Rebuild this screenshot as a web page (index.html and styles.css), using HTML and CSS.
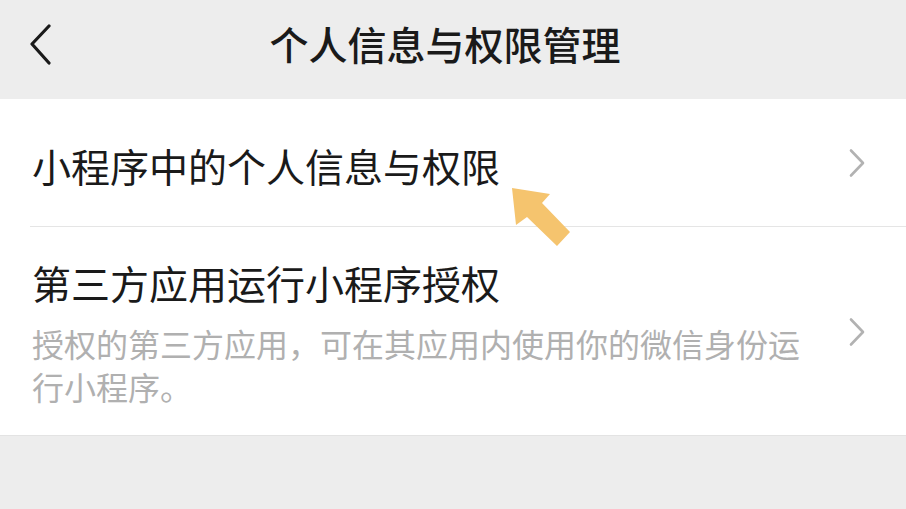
FILE: index.html
```html
<!DOCTYPE html>
<html lang="zh-CN">
<head>
<meta charset="utf-8">
<title>个人信息与权限管理</title>
<link rel="stylesheet" href="styles.css">
</head>
<body>
<div class="page">
  <header class="nav">
    <span class="nav-back" aria-label="返回">
      <svg width="24" height="42" viewBox="0 0 24 42"><polyline points="20,3 3,21 20,40" fill="none" stroke="#1a1a1a" stroke-width="3.2" stroke-linecap="round" stroke-linejoin="round"/></svg>
    </span>
    <h1 class="nav-title">个人信息与权限管理</h1>
  </header>

  <section class="list">
    <div class="cell cell-single">
      <div class="cell-body">
        <div class="cell-title">小程序中的个人信息与权限</div>
      </div>
      <svg class="cell-arrow" width="18" height="30" viewBox="0 0 18 30"><polyline points="3,2.5 15,15 3,27.5" fill="none" stroke="#b2b2b2" stroke-width="2.6" stroke-linecap="round" stroke-linejoin="round"/></svg>
    </div>
    <div class="cell cell-double">
      <div class="cell-body">
        <div class="cell-title">第三方应用运行小程序授权</div>
        <div class="cell-desc">授权的第三方应用，可在其应用内使用你的微信身份运行小程序。</div>
      </div>
      <svg class="cell-arrow" width="18" height="30" viewBox="0 0 18 30"><polyline points="3,2.5 15,15 3,27.5" fill="none" stroke="#b2b2b2" stroke-width="2.6" stroke-linecap="round" stroke-linejoin="round"/></svg>
    </div>

    <svg class="pointer" width="70" height="70" viewBox="0 0 70 70">
      <polygon points="2,3 40,9 32,18 60,47 47,61 17,32 6,40" fill="#f5c46e"/>
    </svg>
  </section>
</div>
</body>
</html>
```

FILE: styles.css
```css
* {
  box-sizing: border-box;
}

html, body {
  margin: 0;
  padding: 0;
}

body {
  width: 906px;
  height: 509px;
  overflow: hidden;
  background: #ededed;
  font-family: "Noto Sans CJK SC", "Noto Sans", sans-serif;
  color: #1a1a1a;
}

.page {
  display: flex;
  flex-direction: column;
}

/* top navigation bar */
.nav {
  height: 99px;
  display: flex;
  align-items: center;
  position: relative;
  background: #ededed;
}

.nav-back {
  position: absolute;
  left: 29px;
  top: 23px;
  display: flex;
}

.nav-title {
  flex: 1;
  margin: 0;
  padding-right: 16px;
  padding-bottom: 14px;
  text-align: center;
  font-size: 39px;
  font-weight: 500;
  line-height: 50px;
  color: #1a1a1a;
}

/* settings list */
.list {
  position: relative;
  background: #fff;
  border-bottom: 1px solid #e3e3e3;
}

.cell {
  display: flex;
  align-items: center;
  padding-left: 32px;
  padding-right: 40px;
  position: relative;
}

.cell + .cell::before {
  content: "";
  position: absolute;
  left: 30px;
  right: 0;
  top: 0;
  height: 1px;
  background: #e5e5e5;
}

.cell-single {
  height: 127px;
  padding-top: 5px;
}

.cell-double {
  height: 209px;
  padding-top: 2px;
}

.cell-body {
  flex: 1;
  display: flex;
  flex-direction: column;
}

.cell-title {
  font-size: 39px;
  line-height: 52px;
  color: #1a1a1a;
}

.cell-double .cell-title {
  margin-bottom: 14px;
}

.cell-desc {
  width: 780px;
  font-size: 32px;
  line-height: 43px;
  color: #b0b0b0;
}

.cell-single .cell-arrow {
  margin-top: -5px;
}

.cell-arrow {
  flex: none;
  margin-left: 18px;
}

/* highlight arrow laid over the first row */
.pointer {
  position: absolute;
  left: 510px;
  top: 86px;
}
```
